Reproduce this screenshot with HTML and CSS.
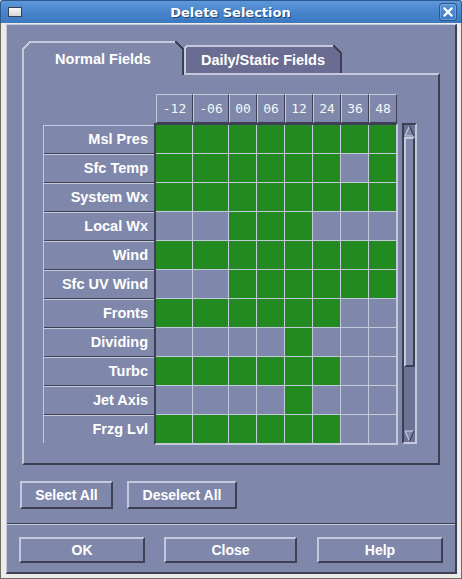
FILE: index.html
```html
<!DOCTYPE html>
<html>
<head>
<meta charset="utf-8">
<title>Delete Selection</title>
<link rel="stylesheet" href="styles.css">
</head>
<body>
<div class="window">
  <div class="titlebar">
    <div class="win-icon"></div>
    <div class="title">Delete Selection</div>
    <div class="close-btn">
      <svg width="10" height="10" viewBox="0 0 10 10"><path d="M1.5 1.5 L8.5 8.5 M8.5 1.5 L1.5 8.5" stroke="#fff" stroke-width="2.2" stroke-linecap="square"/></svg>
    </div>
  </div>
  <div class="frame">
    <div class="client">
      <div class="upper">
        <div class="tabs">
          <div class="tab tab-active">Normal Fields</div>
          <div class="tab tab-inactive">Daily/Static Fields</div>
        </div>
        <div class="panel">
          <div class="header-row">
            <div class="hcell">-12</div>
            <div class="hcell">-06</div>
            <div class="hcell">00</div>
            <div class="hcell">06</div>
            <div class="hcell">12</div>
            <div class="hcell">24</div>
            <div class="hcell">36</div>
            <div class="hcell">48</div>
          </div>
          <div class="main-row">
            <div class="labels">
              <div class="label">Msl Pres</div>
              <div class="label">Sfc Temp</div>
              <div class="label">System Wx</div>
              <div class="label">Local Wx</div>
              <div class="label">Wind</div>
              <div class="label">Sfc UV Wind</div>
              <div class="label">Fronts</div>
              <div class="label">Dividing</div>
              <div class="label">Turbc</div>
              <div class="label">Jet Axis</div>
              <div class="label">Frzg Lvl</div>
            </div>
            <div class="grid-box">
              <div class="cells">
                <span class="c on"></span><span class="c on"></span><span class="c on"></span><span class="c on"></span><span class="c on"></span><span class="c on"></span><span class="c on"></span><span class="c on"></span>
                <span class="c on"></span><span class="c on"></span><span class="c on"></span><span class="c on"></span><span class="c on"></span><span class="c on"></span><span class="c"></span><span class="c on"></span>
                <span class="c on"></span><span class="c on"></span><span class="c on"></span><span class="c on"></span><span class="c on"></span><span class="c on"></span><span class="c on"></span><span class="c on"></span>
                <span class="c"></span><span class="c"></span><span class="c on"></span><span class="c on"></span><span class="c on"></span><span class="c"></span><span class="c"></span><span class="c"></span>
                <span class="c on"></span><span class="c on"></span><span class="c on"></span><span class="c on"></span><span class="c on"></span><span class="c on"></span><span class="c on"></span><span class="c on"></span>
                <span class="c"></span><span class="c"></span><span class="c on"></span><span class="c on"></span><span class="c on"></span><span class="c on"></span><span class="c on"></span><span class="c on"></span>
                <span class="c on"></span><span class="c on"></span><span class="c on"></span><span class="c on"></span><span class="c on"></span><span class="c on"></span><span class="c"></span><span class="c"></span>
                <span class="c"></span><span class="c"></span><span class="c"></span><span class="c"></span><span class="c on"></span><span class="c"></span><span class="c"></span><span class="c"></span>
                <span class="c on"></span><span class="c on"></span><span class="c on"></span><span class="c on"></span><span class="c on"></span><span class="c on"></span><span class="c"></span><span class="c"></span>
                <span class="c"></span><span class="c"></span><span class="c"></span><span class="c"></span><span class="c on"></span><span class="c"></span><span class="c"></span><span class="c"></span>
                <span class="c on"></span><span class="c on"></span><span class="c on"></span><span class="c on"></span><span class="c on"></span><span class="c on"></span><span class="c"></span><span class="c"></span>
              </div>
            </div>
            <div class="scrollbar">
              <div class="arrow arrow-up">
                <svg width="11" height="12" viewBox="0 0 11 12">
                  <polygon points="5.5,1 10,11 1,11" fill="#7f88aa"/>
                  <path d="M1 11 L5.5 1" stroke="#c4c9dc" stroke-width="1.2" fill="none"/>
                  <path d="M1 11 L10 11" stroke="#c4c9dc" stroke-width="1.2" fill="none"/>
                  <path d="M5.5 1 L10 11" stroke="#3c4052" stroke-width="1.2" fill="none"/>
                </svg>
              </div>
              <div class="track">
                <div class="slider"></div>
              </div>
              <div class="arrow arrow-down">
                <svg width="11" height="12" viewBox="0 0 11 12">
                  <polygon points="1,1 10,1 5.5,11" fill="#7f88aa"/>
                  <path d="M1 1 L10 1" stroke="#c4c9dc" stroke-width="1.2" fill="none"/>
                  <path d="M1 1 L5.5 11" stroke="#c4c9dc" stroke-width="1.2" fill="none"/>
                  <path d="M10 1 L5.5 11" stroke="#3c4052" stroke-width="1.2" fill="none"/>
                </svg>
              </div>
            </div>
          </div>
        </div>
        <div class="select-row">
          <div class="btn btn-select">Select All</div>
          <div class="btn btn-deselect">Deselect All</div>
        </div>
      </div>
      <div class="separator"></div>
      <div class="lower">
        <div class="btn btn-bottom btn-ok">OK</div>
        <div class="btn btn-bottom btn-close">Close</div>
        <div class="btn btn-bottom btn-help">Help</div>
      </div>
    </div>
  </div>
</div>
</body>
</html>
```

FILE: styles.css
```css
* { box-sizing: border-box; }

html, body {
  margin: 0;
  padding: 0;
}

body {
  width: 462px;
  height: 579px;
  overflow: hidden;
  background: #eeebe6;
  font-family: "Liberation Sans", Arial, sans-serif;
}

.window {
  width: 462px;
  height: 579px;
  display: flex;
  flex-direction: column;
}

/* ---------- title bar ---------- */
.titlebar {
  height: 23px;
  flex: none;
  display: flex;
  align-items: center;
  padding: 0 4px 0 7px;
  background: linear-gradient(to bottom, #5e98d9 0%, #4885cc 50%, #3c78c0 100%);
  border: 1px solid #2b5a92;
  border-bottom: none;
  border-radius: 3px 3px 0 0;
}

.win-icon {
  width: 14px;
  height: 10px;
  flex: none;
  border: 1px solid #3a3f48;
  background: linear-gradient(to bottom, #f7f7f7, #d6d6d6);
}

.title {
  flex: 1;
  text-align: center;
  color: #ffffff;
  font-family: "DejaVu Sans", sans-serif;
  font-weight: bold;
  font-size: 13px;
  line-height: 16px;
  text-shadow: 1px 1px 0 #23446e;
  padding-top: 1px;
}

.close-btn {
  width: 18px;
  height: 18px;
  flex: none;
  border: 1px solid #2a5890;
  border-radius: 3px;
  background: linear-gradient(to bottom, #5a94d6, #3f7bc3);
  box-shadow: inset 0 0 0 1px rgba(255, 255, 255, 0.22);
  display: flex;
  align-items: center;
  justify-content: center;
}

.close-btn svg { display: block; }

/* ---------- frame ---------- */
.frame {
  flex: 1;
  display: flex;
  padding: 1px 4px 4px 5px;
  background: #eeebe6;
  border: 1px solid #6c6b68;
  border-top: none;
}

.client {
  flex: 1;
  display: flex;
  flex-direction: column;
  background: #7f88aa;
  border-top: 1px solid #c4c9dc;
  border-left: 1px solid #c4c9dc;
  border-right: 2px solid #3c4052;
  border-bottom: 2px solid #3c4052;
}

.upper {
  padding: 16px 15px 14px 15px;
}

/* ---------- tabs ---------- */
.tabs {
  height: 32px;
  display: flex;
  align-items: flex-end;
}

.tab {
  position: relative;
  color: #ffffff;
  font-weight: bold;
  font-size: 14.5px;
  line-height: 16px;
  text-align: center;
}

.tab-active {
  width: 162px;
  height: 34px;
  margin-bottom: -2px;
  z-index: 1;
  background: #7f88aa;
  border-top: 2px solid #c4c9dc;
  border-left: 2px solid #c4c9dc;
  border-right: 2px solid #3c4052;
  padding-top: 8px;
}

.tab-active::before {
  content: "";
  position: absolute;
  top: -2px;
  left: -2px;
  width: 9px;
  height: 9px;
  background: linear-gradient(135deg, #7f88aa 0 40%, #c4c9dc 40% 58%, transparent 58%);
}

.tab-active::after {
  content: "";
  position: absolute;
  top: -2px;
  right: -2px;
  width: 9px;
  height: 9px;
  background: linear-gradient(225deg, #7f88aa 0 40%, #3c4052 40% 58%, transparent 58%);
}

.tab-inactive {
  width: 158px;
  height: 28px;
  background: #6b6c91;
  border-top: 2px solid #c4c9dc;
  border-left: 2px solid #c4c9dc;
  border-right: 2px solid #3c4052;
  padding-top: 5px;
}

.tab-inactive::before {
  content: "";
  position: absolute;
  top: -2px;
  left: -2px;
  width: 4px;
  height: 4px;
  background: linear-gradient(135deg, #7f88aa 0 30%, #c4c9dc 30% 70%, transparent 70%);
}

.tab-inactive::after {
  content: "";
  position: absolute;
  top: -2px;
  right: -2px;
  width: 9px;
  height: 9px;
  background: linear-gradient(225deg, #7f88aa 0 40%, #3c4052 40% 58%, transparent 58%);
}

/* ---------- panel ---------- */
.panel {
  width: 418px;
  height: 392px;
  border-top: 2px solid #c4c9dc;
  border-left: 2px solid #c4c9dc;
  border-right: 2px solid #3c4052;
  border-bottom: 2px solid #3c4052;
  padding: 19px 0 0 19px;
}

.header-row {
  margin-left: 113px;
  height: 29px;
  display: grid;
  grid-template-columns: 37px 36px repeat(6, 28px);
}

.hcell {
  border-top: 1px solid #c4c9dc;
  border-left: 1px solid #c4c9dc;
  border-right: 1px solid #3c4052;
  border-bottom: 1px solid #3c4052;
  color: #f6f6f6;
  font-family: "DejaVu Sans Mono", monospace;
  font-size: 13px;
  line-height: 27px;
  text-align: center;
}

.main-row {
  display: flex;
  align-items: flex-start;
}

.labels {
  width: 111px;
  margin-top: 2px;
  border-left: 1px solid #c4c9dc;
}

.label {
  height: 29px;
  border-top: 1px solid #c4c9dc;
  border-bottom: 1px solid #3c4052;
  color: #ffffff;
  font-weight: bold;
  font-size: 14.5px;
  line-height: 27px;
  text-align: right;
  padding-right: 6px;
  white-space: nowrap;
}

.label:last-child {
  height: 28px;
  border-bottom: none;
}

.grid-box {
  width: 244px;
  border-top: 2px solid #3c4052;
  border-left: 2px solid #3c4052;
  border-right: 2px solid #c4c9dc;
  border-bottom: 2px solid #c4c9dc;
}

.cells {
  display: grid;
  grid-template-columns: 36px 35px repeat(6, 27px);
  grid-auto-rows: 28px;
  gap: 1px;
  background: #c4c9dc;
}

.c { display: block; background: #7f88aa; }
.c.on { background: #218a21; }

/* ---------- scrollbar ---------- */
.scrollbar {
  width: 15px;
  height: 321px;
  margin-left: 4px;
  display: flex;
  flex-direction: column;
  background: #6d7295;
  border-top: 2px solid #3c4052;
  border-left: 2px solid #3c4052;
  border-right: 2px solid #c4c9dc;
  border-bottom: 2px solid #c4c9dc;
}

.arrow {
  height: 12px;
  flex: none;
}

.arrow svg { display: block; }

.track {
  flex: 1;
}

.slider {
  height: 230px;
  background: #7f88aa;
  border-top: 2px solid #c4c9dc;
  border-left: 2px solid #c4c9dc;
  border-right: 2px solid #3c4052;
  border-bottom: 2px solid #3c4052;
}

/* ---------- buttons ---------- */
.btn {
  color: #ffffff;
  font-weight: bold;
  font-size: 14px;
  text-align: center;
  background: #7f88aa;
  border-top: 2px solid #c4c9dc;
  border-left: 2px solid #c4c9dc;
  border-right: 2px solid #3c4052;
  border-bottom: 2px solid #3c4052;
  white-space: nowrap;
}

.select-row {
  display: flex;
  gap: 14px;
  margin-top: 16px;
  margin-left: -2px;
}

.select-row .btn {
  height: 28px;
  line-height: 24px;
}

.btn-select { width: 93px; }
.btn-deselect { width: 110px; }

.separator {
  height: 2px;
  flex: none;
  border-top: 1px solid #3c4052;
  border-bottom: 1px solid #c4c9dc;
}

.lower {
  display: flex;
  padding: 12px 0 0 12px;
}

.btn-bottom {
  height: 26px;
  line-height: 22px;
}

.btn-ok { width: 126px; }
.btn-close { width: 133px; margin-left: 19px; }
.btn-help { width: 126px; margin-left: 20px; }
```
